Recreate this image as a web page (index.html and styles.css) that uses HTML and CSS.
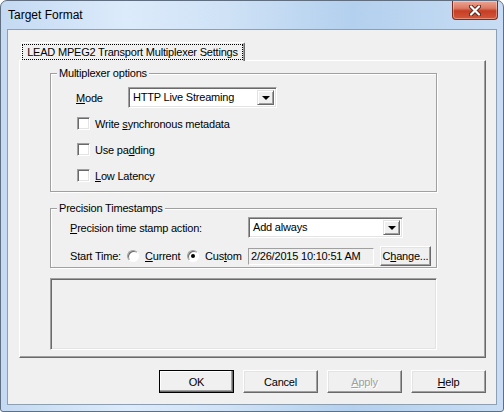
FILE: index.html
```html
<!DOCTYPE html>
<html lang="en">
	<head>
		<meta charset="UTF-8">
		<meta name="viewport" content="width=device-width, initial-scale=1.0">
		<title>Target Format</title>
		<link rel="stylesheet" href="styles.css">
	</head>
    <body>
        <div class="window">
            <div class="titlebar">
                <span class="caption">Target Format</span>
                <button type="button" class="close">
                    <svg width="12" height="11" viewBox="0 0 12 11">
                        <path d="M2 1.5 L10 9.5 M10 1.5 L2 9.5" stroke="#5a2a22" stroke-width="4.2" stroke-linecap="round"/>
                        <path d="M2 1.5 L10 9.5 M10 1.5 L2 9.5" stroke="#fff" stroke-width="2.2" stroke-linecap="round"/>
                    </svg>
                </button>
            </div>
            <div class="client">
                <div class="tabs">
                    <div class="tab"><span class="focus">LEAD MPEG2 Transport Multiplexer Settings</span></div>
                </div>
                <div class="page">
                    <div class="group group_mux">
                        <span class="legend">Multiplexer options</span>
                        <div class="row row_mode">
                            <span class="lbl_mode"><u>M</u>ode</span>
                            <div class="combo combo_mode"><span class="value">HTTP Live Streaming</span><span class="drop"></span></div>
                        </div>
                        <div class="checks">
                            <div class="check"><span class="box"></span><span>Write <u>s</u>ynchronous metadata</span></div>
                            <div class="check"><span class="box"></span><span>Use pa<u>d</u>ding</span></div>
                            <div class="check"><span class="box"></span><span><u>L</u>ow Latency</span></div>
                        </div>
                    </div>
                    <div class="group group_ts">
                        <span class="legend">Precision Timestamps</span>
                        <div class="row row_action">
                            <span class="lbl_action"><u>P</u>recision time stamp action:</span>
                            <div class="combo combo_action"><span class="value">Add always</span><span class="drop"></span></div>
                        </div>
                        <div class="row row_start">
                            <span class="lbl_start">Start Time:</span>
                            <div class="opt opt_current"><span class="radio"></span><span><u>C</u>urrent</span></div>
                            <div class="opt opt_custom"><span class="radio checked"></span><span>Cus<u>t</u>om</span></div>
                            <div class="field">2/26/2015 10:10:51 AM</div>
                            <button type="button" class="btn btn_small">C<u>h</u>ange...</button>
                        </div>
                    </div>
                    <div class="sunken"></div>
                </div>
                <div class="buttons">
                    <button type="button" class="btn default">OK</button>
                    <button type="button" class="btn">Cancel</button>
                    <button type="button" class="btn disabled"><u>A</u>pply</button>
                    <button type="button" class="btn"><u>H</u>elp</button>
                </div>
            </div>
        </div>
    </body>
</html>
```

FILE: styles.css
```css
body{padding:0; margin:0; font-family:"Liberation Sans", Arial, sans-serif; font-size:11px; letter-spacing:-0.2px; color:#000;}

/* window frame */
.window{
    width:504px; height:412px; box-sizing:border-box;
    border:1px solid #5f6e80; border-radius:7px 7px 3px 3px;
    background:linear-gradient(to right, #c4daf2 0%, #dcebfb 25%, #cfe2f6 45%, #b3d0ee 70%, #c8ddf4 100%);
    display:flex; flex-direction:column;
}
.titlebar{height:28px; display:flex; align-items:flex-start; padding:0 5px 0 7px;}
.caption{line-height:28px; font-size:12px; letter-spacing:0; color:#000;}
.close{
    margin-left:auto; width:46px; height:19px; padding:0; box-sizing:border-box;
    border:1px solid #7a2e22; border-top:none; border-radius:0 0 4px 4px;
    background:linear-gradient(#eca595 0%, #dd7a62 40%, #c63d24 55%, #d2583c 100%);
    box-shadow:inset 0 0 0 1px rgba(255,255,255,.35);
    display:flex; align-items:center; justify-content:center;
}
.client{
    flex:1; margin:0 6px 6px; border:1px solid #8c9fb3;
    background:#f0f0f0; padding:12px 10px 0 11px;
    display:flex; flex-direction:column;
}

/* tab */
.tabs{display:flex; padding-left:2px; height:19px; margin-bottom:-1px; position:relative; z-index:1;}
.tab{
    width:224px; height:19px; box-sizing:border-box;
    border:1px solid; border-color:#fff #696969 transparent #fff; border-bottom:0;
    border-radius:2px 2px 0 0;
    background:#f0f0f0; box-shadow:inset -1px 0 #a0a0a0;
    padding-top:1px;
}
.focus{display:block; width:221px; height:16px; box-sizing:border-box; border:1px dotted #000; line-height:14px; text-align:center;}
.page{
    height:298px; box-sizing:border-box;
    border:1px solid; border-color:#fff #696969 #696969 #fff;
    box-shadow:inset -1px -1px #a0a0a0;
    padding:12px 0 0 30px;
}

/* group boxes */
.group{width:387px; box-sizing:border-box; border:1px solid #a0a0a0; box-shadow:inset 1px 1px #fff, 1px 1px #fff;}
.group_mux{height:119px;}
.group_ts{height:60px; margin-top:16px;}
.legend{
    display:block; width:fit-content; margin:-7px 0 0 6px; padding:0 2px;
    line-height:13px; background:#f0f0f0; position:relative;
}
.row{display:flex; align-items:center;}
.row_mode{height:21px; margin:7px 0 0 25px;}
.lbl_mode{width:52px;}
.checks{display:flex; flex-direction:column; gap:13px; margin:9px 0 0 26px;}
.check{display:flex; align-items:center; gap:5px; height:13px;}
.box{
    width:13px; height:13px; box-sizing:border-box; background:#fff;
    border:1px solid; border-color:#a0a0a0 #fff #fff #a0a0a0;
    box-shadow:inset 1px 1px #696969, inset -1px -1px #e3e3e3;
}
.row_action{height:21px; margin:2px 0 0 19px;}
.lbl_action{width:178px;}
.row_start{height:20px; margin:8px 0 0 19px;}
.lbl_start{width:57px;}
.opt{display:flex; align-items:center; gap:6px;}
.opt_current{width:60px;}
.opt_custom{width:61px;}
.radio{
    width:12px; height:12px; box-sizing:border-box; border-radius:50%; background:#fff;
    border:1px solid; border-color:#a0a0a0 #fff #fff #a0a0a0;
    box-shadow:inset 1px 1px #696969;
    display:flex; align-items:center; justify-content:center;
}
.radio.checked::after{content:""; width:4px; height:4px; border-radius:50%; background:#000;}
.field{
    width:126px; height:17px; box-sizing:border-box; margin-right:6px;
    border:1px solid; border-color:#a0a0a0 #fff #fff #a0a0a0;
    padding-left:2px; line-height:15px; background:#f0f0f0;
}

/* combo box */
.combo{
    display:flex; height:21px; box-sizing:border-box; padding:2px; background:#fff;
    border:1px solid; border-color:#a0a0a0 #fff #fff #a0a0a0;
    box-shadow:inset 1px 1px #696969, inset -1px -1px #e3e3e3;
}
.combo_mode{width:149px;}
.combo_action{width:155px;}
.value{flex:1; line-height:15px; padding-left:2px;}
.drop{
    width:17px; box-sizing:border-box; background:#f0f0f0;
    border:1px solid; border-color:#e3e3e3 #696969 #696969 #e3e3e3;
    box-shadow:inset 1px 1px #fff, inset -1px -1px #a0a0a0;
    display:flex; align-items:center; justify-content:center;
}
.drop::after{content:""; border-top:4px solid #000; border-left:4px solid transparent; border-right:4px solid transparent; margin-top:1px;}
.sunken{
    width:387px; height:72px; box-sizing:border-box; margin-top:10px;
    border:1px solid; border-color:#a0a0a0 #fff #fff #a0a0a0;
    box-shadow:inset 1px 1px #696969, inset -1px -1px #e3e3e3;
}

/* buttons */
.buttons{display:flex; justify-content:flex-end; gap:9px; margin-top:12px;}
.btn{
    width:75px; height:23px; box-sizing:border-box; padding:0; margin:0;
    font:11px "Liberation Sans", Arial, sans-serif; letter-spacing:-0.2px; color:#000; background:#f0f0f0;
    border:1px solid; border-color:#fff #696969 #696969 #fff;
    box-shadow:inset -1px -1px #a0a0a0, inset 1px 1px #e3e3e3;
}
.btn.default{border-color:#000; box-shadow:inset -1px -1px #696969, inset -2px -2px #a0a0a0, inset 1px 1px #fff;}
.btn.disabled{color:#a0a0a0; text-shadow:1px 1px #fff;}
.btn_small{width:51px; height:20px;}
```
